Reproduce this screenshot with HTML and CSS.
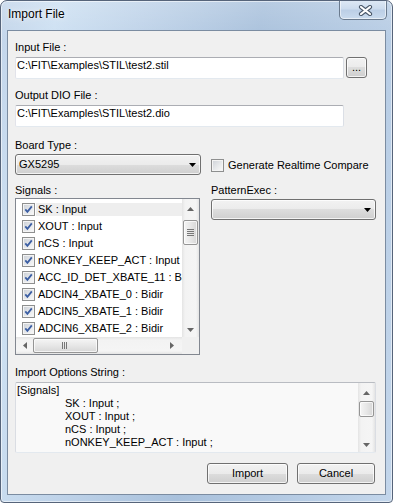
FILE: index.html
```html
<!DOCTYPE html>
<html>
<head>
<meta charset="utf-8">
<title>Import File</title>
<link rel="stylesheet" href="styles.css">
</head>
<body>
<div class="window">
  <div class="titlebar">
    <span class="title">Import File</span>
    <div class="close-btn">
      <svg width="15" height="11" viewBox="0 0 15 11"><path d="M3 2 L12 9 M12 2 L3 9" stroke="#4b596b" stroke-width="4.2" stroke-linecap="round" fill="none"/><path d="M3 2 L12 9 M12 2 L3 9" stroke="#ffffff" stroke-width="2.2" stroke-linecap="round" fill="none"/></svg>
    </div>
  </div>
  <div class="client">
    <div class="label lbl-input">Input File :</div>
    <div class="file-row">
      <div class="textbox textbox-wide">C:\FIT\Examples\STIL\test2.stil</div>
      <div class="btn browse">...</div>
    </div>
    <div class="label lbl-output">Output DIO File :</div>
    <div class="textbox textbox-wide textbox-output">C:\FIT\Examples\STIL\test2.dio</div>
    <div class="label lbl-board">Board Type :</div>
    <div class="cols">
      <div class="col-left">
        <div class="combo combo-board">
          <span class="combo-text">GX5295</span>
          <svg class="combo-arrow" width="7" height="4" viewBox="0 0 7 4"><polygon points="0,0 7,0 3.5,4" fill="#000"/></svg>
        </div>
        <div class="label lbl-signals">Signals :</div>
        <div class="listbox">
          <div class="list-main">
            <div class="list-items">
              <div class="row sel"><span class="cb"><svg width="9" height="9" viewBox="0 0 9 9"><path d="M1.3 4.4 L3.4 6.8 L7.8 1.4" stroke="#3b5ea3" stroke-width="1.8" fill="none"/></svg></span><span class="row-text">SK : Input</span></div>
              <div class="row"><span class="cb"><svg width="9" height="9" viewBox="0 0 9 9"><path d="M1.3 4.4 L3.4 6.8 L7.8 1.4" stroke="#3b5ea3" stroke-width="1.8" fill="none"/></svg></span><span class="row-text">XOUT : Input</span></div>
              <div class="row"><span class="cb"><svg width="9" height="9" viewBox="0 0 9 9"><path d="M1.3 4.4 L3.4 6.8 L7.8 1.4" stroke="#3b5ea3" stroke-width="1.8" fill="none"/></svg></span><span class="row-text">nCS : Input</span></div>
              <div class="row"><span class="cb"><svg width="9" height="9" viewBox="0 0 9 9"><path d="M1.3 4.4 L3.4 6.8 L7.8 1.4" stroke="#3b5ea3" stroke-width="1.8" fill="none"/></svg></span><span class="row-text">nONKEY_KEEP_ACT : Input</span></div>
              <div class="row"><span class="cb"><svg width="9" height="9" viewBox="0 0 9 9"><path d="M1.3 4.4 L3.4 6.8 L7.8 1.4" stroke="#3b5ea3" stroke-width="1.8" fill="none"/></svg></span><span class="row-text">ACC_ID_DET_XBATE_11 : Bidir</span></div>
              <div class="row"><span class="cb"><svg width="9" height="9" viewBox="0 0 9 9"><path d="M1.3 4.4 L3.4 6.8 L7.8 1.4" stroke="#3b5ea3" stroke-width="1.8" fill="none"/></svg></span><span class="row-text">ADCIN4_XBATE_0 : Bidir</span></div>
              <div class="row"><span class="cb"><svg width="9" height="9" viewBox="0 0 9 9"><path d="M1.3 4.4 L3.4 6.8 L7.8 1.4" stroke="#3b5ea3" stroke-width="1.8" fill="none"/></svg></span><span class="row-text">ADCIN5_XBATE_1 : Bidir</span></div>
              <div class="row"><span class="cb"><svg width="9" height="9" viewBox="0 0 9 9"><path d="M1.3 4.4 L3.4 6.8 L7.8 1.4" stroke="#3b5ea3" stroke-width="1.8" fill="none"/></svg></span><span class="row-text">ADCIN6_XBATE_2 : Bidir</span></div>
            </div>
            <div class="vscroll vscroll-list">
              <div class="sb-btn sb-up"><svg width="7" height="4" viewBox="0 0 7 4"><polygon points="0,4 7,4 3.5,0" fill="#666"/></svg></div>
              <div class="thumb-v thumb-list">
                <svg width="7" height="7" viewBox="0 0 7 7"><path d="M0 0.5H7M0 2.5H7M0 4.5H7M0 6.5H7" stroke="#777" stroke-width="1"/></svg>
              </div>
              <div class="sb-btn sb-down"><svg width="7" height="4" viewBox="0 0 7 4"><polygon points="0,0 7,0 3.5,4" fill="#666"/></svg></div>
            </div>
          </div>
          <div class="hscroll-row">
            <div class="hscroll">
              <div class="sb-btn-h"><svg width="4" height="7" viewBox="0 0 4 7"><polygon points="4,0 4,7 0,3.5" fill="#666"/></svg></div>
              <div class="thumb-h">
                <svg width="7" height="7" viewBox="0 0 7 7"><path d="M0.5 0V7M2.5 0V7M4.5 0V7" stroke="#777" stroke-width="1"/></svg>
              </div>
              <div class="sb-btn-h sb-right"><svg width="4" height="7" viewBox="0 0 4 7"><polygon points="0,0 0,7 4,3.5" fill="#666"/></svg></div>
            </div>
            <div class="corner"></div>
          </div>
        </div>
      </div>
      <div class="col-right">
        <div class="check-row">
          <span class="cb cb-empty"></span>
          <span class="check-text">Generate Realtime Compare</span>
        </div>
        <div class="label lbl-pattern">PatternExec :</div>
        <div class="combo combo-pattern">
          <span class="combo-text"></span>
          <svg class="combo-arrow" width="7" height="4" viewBox="0 0 7 4"><polygon points="0,0 7,0 3.5,4" fill="#000"/></svg>
        </div>
      </div>
    </div>
    <div class="label lbl-options">Import Options String :</div>
    <div class="textarea">
      <div class="ta-text">
        <div class="ta-line">[Signals]</div>
        <div class="ta-line ind">SK : Input ;</div>
        <div class="ta-line ind">XOUT : Input ;</div>
        <div class="ta-line ind">nCS : Input ;</div>
        <div class="ta-line ind">nONKEY_KEEP_ACT : Input ;</div>
      </div>
      <div class="vscroll vscroll-ta">
        <div class="sb-btn sb-up"><svg width="7" height="4" viewBox="0 0 7 4"><polygon points="0,4 7,4 3.5,0" fill="#666"/></svg></div>
        <div class="thumb-v thumb-ta"></div>
        <div class="sb-btn sb-down"><svg width="7" height="4" viewBox="0 0 7 4"><polygon points="0,0 7,0 3.5,4" fill="#666"/></svg></div>
      </div>
    </div>
    <div class="buttons">
      <div class="btn btn-import">Import</div>
      <div class="btn btn-cancel">Cancel</div>
    </div>
  </div>
</div>
</body>
</html>
```
FILE: styles.css
```css
* { box-sizing: border-box; }
html, body { margin: 0; padding: 0; }
body {
  width: 393px;
  height: 503px;
  overflow: hidden;
  background: #ffffff;
  font-family: "Liberation Sans", Arial, sans-serif;
  font-size: 11px;
  color: #000;
}

.window {
  width: 393px;
  height: 503px;
  border: 1px solid #56647a;
  border-radius: 7px 7px 4px 4px;
  background:
    linear-gradient(180deg, rgba(255,255,255,0.18) 0%, rgba(255,255,255,0) 40px),
    linear-gradient(100deg, #c3d5ea 0%, #cde0f2 12%, #bfd3e9 30%, #a9c1dc 55%, #b3c9e2 75%, #c3d6eb 100%);
  box-shadow: inset 0 0 0 1px rgba(255,255,255,0.55);
  display: flex;
  flex-direction: column;
  overflow: hidden;
}

.titlebar {
  height: 29px;
  display: flex;
  align-items: flex-start;
  padding-left: 7px;
  flex: none;
}
.title {
  flex: 1;
  font-size: 12px;
  line-height: 15px;
  margin-top: 6px;
  color: #000;
  text-shadow: 0 0 6px rgba(255,255,255,0.9), 0 0 2px rgba(255,255,255,0.8);
}
.close-btn {
  width: 48px;
  height: 20px;
  margin-top: -1px;
  margin-right: 5px;
  border: 1px solid #6a7a8e;
  border-top: none;
  border-radius: 0 0 5px 5px;
  background: linear-gradient(180deg, #dfe9f5 0%, #cddcee 45%, #bccfe6 55%, #cadbee 100%);
  box-shadow: inset 0 0 0 1px rgba(255,255,255,0.55);
  display: flex;
  align-items: center;
  justify-content: center;
  padding-left: 5px;
  padding-top: 1px;
}

.client {
  height: 465px;
  margin: 0 6px;
  border: 1px solid #7b8ca1;
  background: #f0f0f0;
  padding: 0 9px 0 7px;
  display: flex;
  flex-direction: column;
  flex: none;
}

.label {
  line-height: 13px;
  white-space: nowrap;
}
.lbl-input { margin-top: 10px; }
.lbl-output { margin-top: 10px; }
.lbl-board { margin-top: 12px; }
.lbl-signals { margin-top: 9px; }
.lbl-pattern { margin-top: 12px; }
.lbl-options { margin-top: 11px; }

.textbox {
  height: 22px;
  border: 1px solid;
  border-color: #abadb3 #dbdfe6 #e3e9ef #e2e3ea;
  border-radius: 2px;
  background: #fff;
  padding: 1px 2px 0 1px;
  line-height: 13px;
  white-space: nowrap;
  overflow: hidden;
}
.textbox-wide { width: 329px; }
.textbox-output { margin-top: 3px; }

.file-row {
  display: flex;
  align-items: flex-start;
  gap: 2px;
  margin-top: 3px;
}

.btn {
  border: 1px solid #707070;
  border-radius: 3px;
  background: linear-gradient(180deg, #f2f2f2 0%, #ebebeb 50%, #dddddd 50%, #cfcfcf 100%);
  box-shadow: inset 0 0 0 1px rgba(255,255,255,0.75);
  text-align: center;
  white-space: nowrap;
}
.browse {
  width: 21px;
  height: 21px;
  line-height: 19px;
}

.cols {
  display: flex;
  gap: 10px;
  margin-top: 2px;
}
.col-left {
  width: 186px;
  display: flex;
  flex-direction: column;
}
.col-right {
  width: 165px;
  display: flex;
  flex-direction: column;
}

.combo {
  height: 21px;
  border: 1px solid #707070;
  border-radius: 3px;
  background: linear-gradient(180deg, #f2f2f2 0%, #ebebeb 50%, #dddddd 50%, #cfcfcf 100%);
  box-shadow: inset 0 0 0 1px rgba(255,255,255,0.75);
  display: flex;
  align-items: center;
  padding: 0 4px 0 3px;
}
.combo-text {
  flex: 1;
  line-height: 13px;
  white-space: nowrap;
}
.combo-arrow { flex: none; }
.combo-board { width: 186px; }
.combo-pattern { margin-top: 2px; width: 165px; padding-right: 4px; }

.listbox {
  width: 185px;
  height: 157px;
  margin-top: 1px;
  border: 1px solid #828790;
  background: #fff;
  display: flex;
  flex-direction: column;
}
.list-main {
  height: 138px;
  display: flex;
}
.list-items {
  flex: 1;
  min-width: 0;
  overflow: hidden;
  padding-top: 2px;
}
.row {
  height: 17px;
  display: flex;
  align-items: center;
  padding-left: 6px;
  white-space: nowrap;
}
.row-text {
  flex: 1;
  margin-left: 1px;
  padding-left: 2px;
  line-height: 13px;
}
.row.sel .row-text { background: #eeeeee; }

.cb {
  flex: none;
  width: 13px;
  height: 13px;
  border: 1px solid #8e8f8f;
  background: linear-gradient(135deg, #c9ced5 0%, #e6e8eb 55%, #fbfbfb 100%);
  box-shadow: inset 0 0 0 1px #f4f4f4;
  display: flex;
  align-items: center;
  justify-content: center;
}

.vscroll {
  width: 17px;
  flex: none;
  display: flex;
  flex-direction: column;
  background: linear-gradient(90deg, #e4e4e4 0%, #f3f3f3 18%, #f5f5f5 82%, #e4e4e4 100%);
}
.sb-btn {
  height: 17px;
  flex: none;
  display: flex;
  justify-content: center;
}
.sb-up { align-items: center; padding-top: 2px; }
.sb-down { margin-top: auto; align-items: center; padding-top: 3px; }
.thumb-v {
  flex: none;
  margin: 0 1px;
  border: 1px solid #959595;
  border-radius: 2px;
  background: linear-gradient(90deg, #f5f5f5 0%, #e7e7e7 50%, #d7d7d7 100%);
  box-shadow: inset 0 0 0 1px rgba(255,255,255,0.7);
  display: flex;
  align-items: center;
  justify-content: center;
}
.thumb-list { height: 25px; margin-top: 4px; }

.hscroll-row {
  height: 17px;
  display: flex;
  flex: none;
}
.hscroll {
  flex: 1;
  display: flex;
  background: linear-gradient(180deg, #e4e4e4 0%, #f3f3f3 18%, #f5f5f5 82%, #e4e4e4 100%);
}
.sb-btn-h {
  width: 17px;
  flex: none;
  display: flex;
  align-items: center;
  justify-content: center;
  padding-left: 1px;
}
.sb-right { margin-left: auto; padding-left: 0; padding-right: 3px; }
.thumb-h {
  width: 65px;
  margin: 1px 0;
  border: 1px solid #959595;
  border-radius: 2px;
  background: linear-gradient(180deg, #f5f5f5 0%, #e7e7e7 50%, #d7d7d7 100%);
  box-shadow: inset 0 0 0 1px rgba(255,255,255,0.7);
  display: flex;
  align-items: center;
  justify-content: center;
}
.corner {
  width: 17px;
  flex: none;
  background: #f0f0f0;
}

.check-row {
  display: flex;
  align-items: center;
  gap: 4px;
  height: 13px;
  margin-top: 5px;
}
.check-text { line-height: 13px; white-space: nowrap; }
.cb-empty {
  background: linear-gradient(135deg, #cdd1d7 0%, #e8eaec 55%, #fbfbfb 100%);
}

.textarea {
  width: 361px;
  height: 71px;
  margin-top: 3px;
  border: 1px solid;
  border-color: #b9bcc2 #dadde3 #e3e9ef #dadde3;
  border-radius: 2px;
  background: #f9f9f9;
  display: flex;
}
.ta-text {
  flex: 1;
  min-width: 0;
  overflow: hidden;
  padding: 1px 0 0 1px;
  line-height: 13px;
  white-space: nowrap;
}
.ta-line.ind { padding-left: 48px; }
.thumb-ta { height: 16px; margin-top: 1px; }

.buttons {
  display: flex;
  justify-content: flex-end;
  gap: 9px;
  margin-top: 10px;
  padding-right: 1px;
}
.btn-import { width: 81px; height: 21px; line-height: 19px; }
.btn-cancel { width: 78px; height: 21px; line-height: 19px; }
```
